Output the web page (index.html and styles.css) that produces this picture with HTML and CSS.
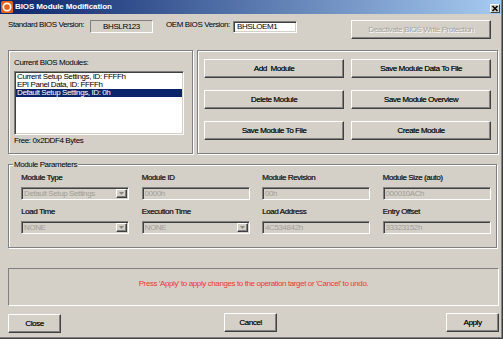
FILE: index.html
```html
<!DOCTYPE html>
<html>
<head>
<meta charset="utf-8">
<link rel="stylesheet" href="styles.css">
</head>
<body>
<div class="window">
  <div class="titlebar">
    <svg class="app-icon" width="12" height="12" viewBox="0 0 12 12"><rect x="0" y="0" width="12" height="12" rx="1.5" fill="#e5621e"/><circle cx="6" cy="6" r="3.7" fill="none" stroke="#fff" stroke-width="1.7"/></svg>
    <span class="title">BIOS Module Modification</span>
    <span class="close-btn"><svg width="8" height="7" viewBox="0 0 8 7"><path d="M1.5 1 L6.5 6 M6.5 1 L1.5 6" stroke="#000" stroke-width="1.6"/></svg></span>
  </div>
  <div class="content">
    <div class="version-row">
      <span class="lbl std-lbl">Standard BIOS Version:</span>
      <span class="static-box">BHSLR123</span>
      <span class="lbl oem-lbl">OEM BIOS Version:</span>
      <span class="edit-box">BHSLOEM1</span>
      <button class="btn disabled deact">Deactivate BIOS Write Protection</button>
    </div>
    <div class="panels">
      <div class="panel modules-panel">
        <div class="lbl">Current BIOS Modules:</div>
        <ul class="listbox">
          <li>Current Setup Settings, ID: FFFFh</li>
          <li>EPI Panel Data, ID: FFFFh</li>
          <li class="selected">Default Setup Settings, ID: 0h</li>
        </ul>
        <div class="lbl free">Free: 0x2DDF4 Bytes</div>
      </div>
      <div class="panel actions-panel">
        <button class="btn">Add&nbsp; Module</button>
        <button class="btn">Save Module Data To File</button>
        <button class="btn">Delete Module</button>
        <button class="btn">Save Module Overview</button>
        <button class="btn">Save Module To File</button>
        <button class="btn">Create Module</button>
      </div>
    </div>
    <div class="group">
      <span class="group-title">Module Parameters</span>
      <div class="param-grid">
        <div class="param">
          <div class="plbl">Module Type</div>
          <div class="field combo"><span class="val">Default Setup Settings</span><span class="drop"><svg width="5" height="3" viewBox="0 0 5 3"><polygon points="0,0 5,0 2.5,3" fill="#8a8780"/></svg></span></div>
        </div>
        <div class="param">
          <div class="plbl">Module ID</div>
          <div class="field"><span class="val">0000h</span></div>
        </div>
        <div class="param">
          <div class="plbl">Module Revision</div>
          <div class="field"><span class="val">00h</span></div>
        </div>
        <div class="param">
          <div class="plbl">Module Size (auto)</div>
          <div class="field"><span class="val">000010ACh</span></div>
        </div>
        <div class="param">
          <div class="plbl">Load Time</div>
          <div class="field combo"><span class="val">NONE</span><span class="drop"><svg width="5" height="3" viewBox="0 0 5 3"><polygon points="0,0 5,0 2.5,3" fill="#8a8780"/></svg></span></div>
        </div>
        <div class="param">
          <div class="plbl">Execution Time</div>
          <div class="field combo"><span class="val">NONE</span><span class="drop"><svg width="5" height="3" viewBox="0 0 5 3"><polygon points="0,0 5,0 2.5,3" fill="#8a8780"/></svg></span></div>
        </div>
        <div class="param">
          <div class="plbl">Load Address</div>
          <div class="field"><span class="val">4C534842h</span></div>
        </div>
        <div class="param">
          <div class="plbl">Entry Offset</div>
          <div class="field"><span class="val">33323152h</span></div>
        </div>
      </div>
    </div>
    <div class="message">Press 'Apply' to apply changes to the operation target or 'Cancel' to undo.</div>
    <div class="footer">
      <button class="btn foot-btn close">Close</button>
      <button class="btn foot-btn cancel">Cancel</button>
      <button class="btn foot-btn apply">Apply</button>
    </div>
  </div>
</div>
</body>
</html>
```
FILE: styles.css
```css
* { box-sizing: border-box; }
html, body { margin: 0; padding: 0; }
body {
  background: #d4d0c8;
  font-family: "Liberation Sans", Arial, sans-serif;
  font-size: 8px;
  letter-spacing: -0.4px;
  color: #000;
  width: 503px;
  height: 339px;
  overflow: hidden;
}
.window {
  width: 503px;
  height: 339px;
  border-right: 1px solid #404040;
  border-bottom: 1px solid #404040;
  box-shadow: inset -1px -1px 0 #808080;
}
.titlebar {
  width: 501px;
  height: 14px;
  background: linear-gradient(to right, #0a246a, #a6caf0);
  display: flex;
  align-items: center;
  padding-left: 1px;
  padding-right: 1px;
}
.app-icon { flex: none; margin-right: 2px; }
.title {
  flex: 1;
  color: #fff;
  font-weight: bold;
  letter-spacing: -0.1px;
  line-height: 14px;
  white-space: nowrap;
}
.close-btn {
  width: 10px;
  height: 9px;
  margin-top: 2px;
  background: #d4d0c8;
  border-top: 1px solid #fff;
  border-left: 1px solid #fff;
  border-right: 1px solid #404040;
  border-bottom: 1px solid #404040;
  display: flex;
  align-items: center;
  justify-content: center;
}
.content { padding-left: 8px; }

.lbl { line-height: 10px; white-space: nowrap; }

.version-row {
  display: flex;
  align-items: flex-start;
  margin-top: 6px;
  height: 19px;
}
.std-lbl { width: 82px; }
.static-box {
  width: 63px;
  height: 13px;
  border-top: 1px solid #808080;
  border-left: 1px solid #808080;
  border-right: 1px solid #fff;
  border-bottom: 1px solid #fff;
  text-align: center;
  line-height: 11px;
  margin-right: 13px;
}
.oem-lbl { width: 67px; }
.edit-box {
  width: 64px;
  height: 12px;
  margin-top: 1px;
  background: #fff;
  border-top: 1px solid #808080;
  border-left: 1px solid #808080;
  border-right: 1px solid #fff;
  border-bottom: 1px solid #fff;
  box-shadow: inset 1px 1px 0 #404040, inset -1px -1px 0 #d4d0c8;
  padding-left: 3px;
  line-height: 10px;
}

.btn {
  font-family: inherit;
  font-size: inherit;
  letter-spacing: inherit;
  color: #000;
  background: #d4d0c8;
  margin: 0;
  padding: 0;
  border-top: 1px solid #fff;
  border-left: 1px solid #fff;
  border-right: 1px solid #404040;
  border-bottom: 1px solid #404040;
  box-shadow: inset -1px -1px 0 #808080;
  line-height: 10px;
  white-space: nowrap;
  text-align: center;
  text-shadow: 0.35px 0 0 rgba(0,0,0,0.6);
}
.btn.disabled {
  color: #a7a39b;
  text-shadow: 1px 1px 0 #fff;
}
.deact {
  width: 140px;
  height: 19px;
  margin-left: 54px;
}

.panels {
  display: flex;
  gap: 4px;
  margin-top: 11px;
}
.panel {
  height: 104px;
  border: 1px solid #808080;
  box-shadow: inset 1px 1px 0 #fff, 1px 1px 0 #fff;
}
.modules-panel {
  width: 185px;
  padding: 7px 0 0 5px;
}
.listbox {
  list-style: none;
  margin: 3px 0 0 0;
  padding: 0;
  width: 170px;
  height: 64px;
  background: #fff;
  border-top: 1px solid #808080;
  border-left: 1px solid #808080;
  border-right: 1px solid #fff;
  border-bottom: 1px solid #fff;
  box-shadow: inset 1px 1px 0 #404040, inset -1px -1px 0 #d4d0c8;
  padding: 1px 1px 0 1px;
}
.listbox li {
  line-height: 8px;
  height: 8px;
  padding-left: 1px;
  white-space: nowrap;
}
.listbox li.selected {
  background: #0a246a;
  color: #fff;
}
.free { margin-top: 1px; }

.actions-panel {
  width: 301px;
  padding: 8px 0 0 6px;
  display: grid;
  grid-template-columns: 140px 140px;
  grid-auto-rows: 19px;
  column-gap: 7px;
  row-gap: 12px;
  align-content: start;
}

.group {
  position: relative;
  margin-top: 10px;
  width: 489px;
  height: 84px;
  border: 1px solid #808080;
  box-shadow: inset 1px 1px 0 #fff, 1px 1px 0 #fff;
  padding: 8px 0 0 12px;
}
.group-title {
  position: absolute;
  top: -5px;
  left: 4px;
  padding: 0 1px;
  background: #d4d0c8;
  line-height: 10px;
  white-space: nowrap;
}
.param-grid {
  display: grid;
  grid-template-columns: repeat(4, 108px);
  column-gap: 12.5px;
  row-gap: 7px;
}
.plbl {
  line-height: 10px;
  margin-bottom: 4px;
  white-space: nowrap;
  color: #1a1a1a;
  text-shadow: 0.4px 0 0 rgba(0,0,0,0.7);
}
.field {
  height: 13px;
  display: flex;
  align-items: flex-start;
  background: #d4d0c8;
  border-top: 1px solid #808080;
  border-left: 1px solid #808080;
  border-right: 1px solid #fff;
  border-bottom: 1px solid #fff;
  box-shadow: inset 1px 1px 0 #404040, inset -1px -1px 0 #d4d0c8;
  padding: 1px 1px 1px 2px;
  overflow: hidden;
}
.val {
  flex: 1;
  line-height: 9px;
  color: #a19d96;
  white-space: nowrap;
  overflow: hidden;
}
.drop {
  flex: none;
  width: 11px;
  height: 9px;
  background: #d4d0c8;
  border-top: 1px solid #fff;
  border-left: 1px solid #fff;
  border-right: 1px solid #404040;
  border-bottom: 1px solid #404040;
  box-shadow: inset -1px -1px 0 #808080;
  display: flex;
  align-items: center;
  justify-content: center;
}

.message {
  margin-top: 20px;
  width: 491px;
  height: 38px;
  border-top: 1px solid #808080;
  border-left: 1px solid #808080;
  border-right: 1px solid #fff;
  border-bottom: 1px solid #fff;
  text-align: center;
  color: #f03434;
  padding-top: 10px;
  line-height: 10px;
  white-space: nowrap;
}

.footer {
  display: flex;
  align-items: flex-start;
  margin-top: 7px;
  width: 491px;
}
.foot-btn {
  width: 53px;
  height: 19px;
}
.close { margin-top: 1px; }
.cancel { margin-left: 163px; }
.apply { margin-left: auto; }
```
